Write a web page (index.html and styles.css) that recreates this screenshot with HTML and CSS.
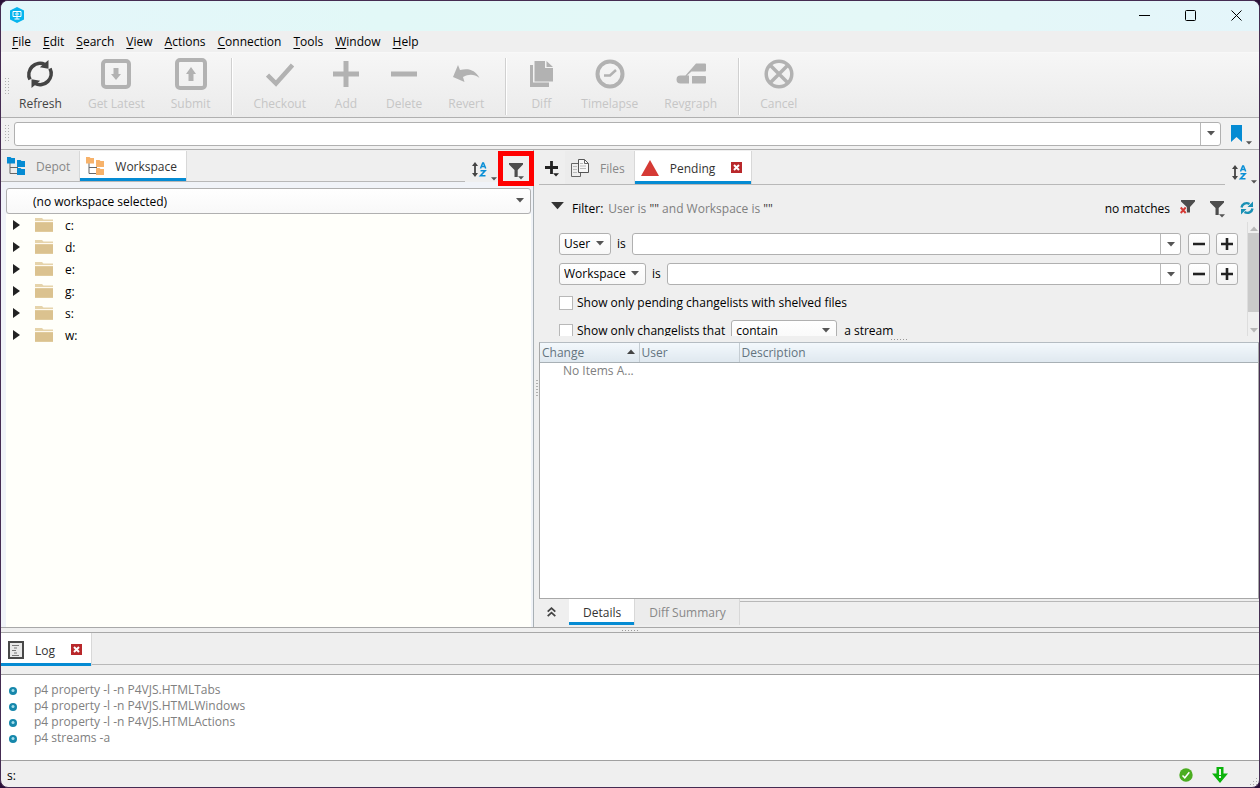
FILE: index.html
```html
<!DOCTYPE html>
<html lang="en">
<head>
<meta charset="utf-8">
<title>P4V</title>
<link rel="stylesheet" href="styles.css">
</head>
<body>
<svg class="defs" aria-hidden="true">
  <symbol id="i-tree" viewBox="0 0 18 18"><path d="M3 5v11.500h8M3 10.500h8" fill="none" stroke="#666" stroke-width="1"/><path d="M0 0h3.500l1 1H8v5.500H0zM10 3h3.500l1 1H18v6h-8zM10 11h3.500l1 1H18v6h-8z" fill="currentColor"/></symbol>
  <symbol id="i-folder" viewBox="0 0 18 14"><path d="M0 0h7l1.500 1.500H18V14H0z" fill="#e6d4ab"/><path d="M0 4.500h18V13.500H0z" fill="#dbc28f"/><path d="M0 3.500h18" stroke="#fffaf0" stroke-width="1"/></symbol>
  <symbol id="i-down" viewBox="0 0 8 5"><path d="M0 0h8L4 4.500z" fill="currentColor"/></symbol>
  <symbol id="i-funnel" viewBox="0 0 14 14"><path d="M0 0h14v1.500L8.700 7v7H5.500V7L0 1.500z" fill="#4d4d4d"/></symbol>
  <symbol id="i-sort" viewBox="0 0 15 16"><path d="M3 2v11" stroke="#444" stroke-width="1.800"/><path d="M3 0L6 4H0zM3 15L0 11h6z" fill="#444"/><path d="M8.500 6.500L10.700 1h.8L13.700 6.500M9.300 4.500h3.600" fill="none" stroke="#0a8fd6" stroke-width="1.500"/><path d="M8.500 8.700h4.600l-4.600 5h5" fill="none" stroke="#0a8fd6" stroke-width="1.600"/></symbol>
  <symbol id="i-close" viewBox="0 0 11 11"><path d="M0 0h11v11H0z" fill="#b9282b"/><path d="M3 3l5 5M8 3L3 8" stroke="#fff" stroke-width="2"/></symbol>
  <symbol id="i-cycle" viewBox="0 0 28 28"><path d="M4 19.500A11.200 11.200 0 0 1 19 4.500M24 8.500A11.200 11.200 0 0 1 9 23.500" fill="none" stroke="currentColor" stroke-width="3.600"/><path d="M22.500 0v8.800L13.800 7.300zM5.500 28v-8.800l8.700 1.500z" fill="currentColor"/></symbol>
  <symbol id="i-minus" viewBox="0 0 12 12"><path d="M0 4.700h12v2.600H0z" fill="currentColor"/></symbol>
  <symbol id="i-plus" viewBox="0 0 12 12"><path d="M0 4.700h4.700V0h2.600v4.700H12v2.600H7.300V12H4.700V7.300H0z" fill="currentColor"/></symbol>
  <symbol id="i-bullet" viewBox="0 0 8 8"><circle cx="4" cy="4" r="4" fill="#1687ab"/><circle cx="4" cy="3.500" r="1.500" fill="#a5deec"/></symbol>
</svg>

<div class="window">
  <header class="titlebar">
    <svg class="app-icon" width="14" height="16" viewBox="0 0 14 16"><path d="M7 0l7 3.500v9L7 16l-7-3.500v-9z" fill="#06b5ee"/><path d="M3 4.500h8v5H3zM7 9.500v2.300M4.500 12h5" fill="none" stroke="#fff" stroke-width="1"/><circle cx="7" cy="7" r="1.200" fill="none" stroke="#fff"/></svg>
    <div class="window-buttons">
      <button aria-label="Minimize"><svg width="11" height="11" viewBox="0 0 11 11"><path d="M0 5.500h11" stroke="#000"/></svg></button>
      <button aria-label="Maximize"><svg width="11" height="11" viewBox="0 0 11 11"><rect x=".5" y=".5" width="10" height="10" rx="1" fill="none" stroke="#000"/></svg></button>
      <button aria-label="Close"><svg width="11" height="11" viewBox="0 0 11 11"><path d="M.5.5l10 10M10.500.5l-10 10" stroke="#000"/></svg></button>
    </div>
  </header>

  <nav class="menubar">
    <button><u>F</u>ile</button><button><u>E</u>dit</button><button><u>S</u>earch</button><button><u>V</u>iew</button><button><u>A</u>ctions</button><button><u>C</u>onnection</button><button><u>T</u>ools</button><button><u>W</u>indow</button><button><u>H</u>elp</button>
  </nav>

  <div class="toolbar">
    <span class="grip"></span>
    <div class="tool-group first">
      <button class="tool"><svg width="28" height="28"><use href="#i-cycle"/></svg>Refresh</button>
      <button class="tool" disabled><svg width="30" height="30" viewBox="0 0 30 30"><rect x="2" y="2" width="26" height="26" rx="3" fill="none" stroke="currentColor" stroke-width="4"/><path d="M12.500 9h5v6H20l-5 6-5-6h2.500z" fill="currentColor"/></svg>Get Latest</button>
      <button class="tool" disabled><svg width="32" height="32" viewBox="0 0 32 32"><rect x="2" y="2" width="28" height="28" rx="3" fill="none" stroke="currentColor" stroke-width="4"/><path d="M13.500 23h5v-7H21l-5-7-5 7h2.500z" fill="currentColor"/></svg>Submit</button>
    </div>
    <div class="tool-group">
      <button class="tool" disabled><svg width="28" height="28" viewBox="0 0 28 28"><path d="M1.500 15l8.500 8.500L26.500 5" fill="none" stroke="currentColor" stroke-width="4.500"/></svg>Checkout</button>
      <button class="tool" disabled><svg width="28" height="28" viewBox="0 0 28 28"><path d="M1 14h26M14 1v26" stroke="currentColor" stroke-width="5"/></svg>Add</button>
      <button class="tool" disabled><svg width="28" height="28" viewBox="0 0 28 28"><path d="M1 14h26" stroke="currentColor" stroke-width="5"/></svg>Delete</button>
      <button class="tool" disabled><svg width="28" height="28" viewBox="0 0 28 28"><path d="M1 17L6 5l2 5c9-2 15 0 19.500 8C22 14 17 14 11 17l1.500 5z" fill="currentColor"/></svg>Revert</button>
    </div>
    <div class="tool-group">
      <button class="tool" disabled><svg width="28" height="28" viewBox="0 0 28 28"><path d="M3 5h3v17.500h16V27H3z" fill="currentColor"/><path d="M7.500 1H18v7h8v13.500H7.500zM19.500 1L26 7h-6.500z" fill="currentColor"/></svg>Diff</button>
      <button class="tool" disabled><svg width="30" height="30" viewBox="0 0 30 30"><circle cx="15" cy="15" r="12.500" fill="none" stroke="currentColor" stroke-width="4"/><path d="M9 16.500h6l6-5.500" fill="none" stroke="currentColor" stroke-width="2.500"/></svg>Timelapse</button>
      <button class="tool" disabled><svg width="30" height="28" viewBox="0 0 30 28"><path d="M9 16L20 3.500h9a1 1 0 0 1 1 1v6a1 1 0 0 1-1 1H15.500L10.500 16zM4.500 15.500H13v8H4.500a4 4 0 0 1 0-8zM16 16h13a1 1 0 0 1 1 1v5.500a1 1 0 0 1-1 1H16z" fill="currentColor"/></svg>Revgraph</button>
    </div>
    <div class="tool-group">
      <button class="tool" disabled><svg width="30" height="30" viewBox="0 0 30 30"><circle cx="15" cy="15" r="12.800" fill="none" stroke="currentColor" stroke-width="3.500"/><path d="M6.500 6.500l17 17M23.500 6.500l-17 17" stroke="currentColor" stroke-width="3.500"/></svg>Cancel</button>
    </div>
  </div>

  <div class="addressbar">
    <span class="grip"></span>
    <div class="combo"><input type="text" aria-label="Address"><button aria-label="Recent locations"><svg width="8" height="5"><use href="#i-down"/></svg></button></div>
    <button class="icon-button" aria-label="Bookmarks"><svg width="11" height="17" viewBox="0 0 11 17"><path d="M0 0h11v17l-5.500-5L0 17z" fill="#058bd3"/></svg><svg class="mini" width="6" height="4"><use href="#i-down"/></svg></button>
  </div>

  <main class="panes">
    <section class="left-pane">
      <div class="tabstrip">
        <div class="tabs">
          <button class="tab blue"><svg width="18" height="18"><use href="#i-tree"/></svg><span>Depot</span></button>
          <button class="tab orange active"><svg width="18" height="18"><use href="#i-tree"/></svg><span>Workspace</span></button>
        </div>
        <div class="tab-tools">
          <button class="icon-button" aria-label="Sort"><svg width="15" height="16"><use href="#i-sort"/></svg><svg class="mini" width="6" height="4"><use href="#i-down"/></svg></button>
          <button class="icon-button highlighted" aria-label="Filter tree"><svg width="14" height="14"><use href="#i-funnel"/></svg><svg class="mini over" width="6" height="4"><use href="#i-down"/></svg></button>
        </div>
      </div>
      <div class="tree-area">
        <div class="select wide"><select aria-label="Workspace"><option>(no workspace selected)</option></select><svg width="8" height="5"><use href="#i-down"/></svg></div>
        <ul class="tree">
          <li><i class="expander"></i><svg width="18" height="14"><use href="#i-folder"/></svg>c:</li>
          <li><i class="expander"></i><svg width="18" height="14"><use href="#i-folder"/></svg>d:</li>
          <li><i class="expander"></i><svg width="18" height="14"><use href="#i-folder"/></svg>e:</li>
          <li><i class="expander"></i><svg width="18" height="14"><use href="#i-folder"/></svg>g:</li>
          <li><i class="expander"></i><svg width="18" height="14"><use href="#i-folder"/></svg>s:</li>
          <li><i class="expander"></i><svg width="18" height="14"><use href="#i-folder"/></svg>w:</li>
        </ul>
      </div>
    </section>

    <div class="splitter vertical"><span></span></div>

    <section class="right-pane">
      <div class="tabstrip">
        <div class="tabs">
          <button class="icon-button add" aria-label="Add tab"><svg width="13" height="13"><use href="#i-plus"/></svg><svg class="mini over" width="6" height="4"><use href="#i-down"/></svg></button>
          <button class="tab files"><svg width="18" height="18" viewBox="0 0 18 18"><path d="M.5 4.500h9v13h-9z" fill="#eee" stroke="#666"/><path d="M7.500.5h6l4 4v9h-10z" fill="#f8f8f8" stroke="#555"/><path d="M13.500.5v4h4" fill="none" stroke="#666"/><path d="M9 4.500h3M9 7h6M9 9.500h6M2 7.500h4M2 10.500h4M2 13.500h4" fill="none" stroke="#bbb"/></svg><span>Files</span></button>
          <button class="tab pending active"><svg width="18" height="16" viewBox="0 0 18 16"><path d="M9 0l9 16H0z" fill="#d53a35"/></svg><span>Pending</span><svg class="close" width="11" height="11"><use href="#i-close"/></svg></button>
        </div>
        <div class="tab-tools">
          <button class="icon-button" aria-label="Sort"><svg width="15" height="16"><use href="#i-sort"/></svg><svg class="mini" width="6" height="4"><use href="#i-down"/></svg></button>
        </div>
      </div>

      <div class="filter">
        <div class="filter-head">
          <svg class="toggle" width="13" height="8"><use href="#i-down"/></svg>
          <span>Filter:</span>
          <span class="query">User is <b>""</b> and Workspace is <b>""</b></span>
          <span class="matches">no matches</span>
          <button class="icon-button" aria-label="Clear filter"><svg width="15" height="15" viewBox="0 0 15 15"><path d="M1 0h14v1.500L10 7v5.500H6.800V7L1 1.500z" fill="#4d4d4d"/><path d="M.7 7.500l5 5.500M5.700 7.500l-5 5.500" stroke="#efefef" stroke-width="3.500"/><path d="M.7 7.500l5 5.500M5.700 7.500l-5 5.500" stroke="#d53a35" stroke-width="1.900"/></svg></button>
          <button class="icon-button funnel" aria-label="Filter menu"><svg width="14" height="14"><use href="#i-funnel"/></svg><svg class="mini over" width="6" height="4"><use href="#i-down"/></svg></button>
          <button class="icon-button teal" aria-label="Refresh list"><svg width="14" height="14" viewBox="0 0 14 14"><path d="M1.500 6.500C2 3 6 .8 9.500 3M12.500 7.500C12 11 8 13.200 4.500 11" fill="none" stroke="currentColor" stroke-width="2.400"/><path d="M13 .5v5.500H7.500zM1 13.500V8h5.500z" fill="currentColor"/></svg></button>
        </div>
        <div class="filter-body">
          <div class="conditions">
            <div class="condition">
              <div class="select user"><select aria-label="Field"><option>User</option></select><svg width="8" height="5"><use href="#i-down"/></svg></div>
              <span>is</span>
              <div class="combo"><input type="text" aria-label="User value"><button aria-label="User choices"><svg width="8" height="5"><use href="#i-down"/></svg></button></div>
              <button class="square" aria-label="Remove"><svg width="12" height="12"><use href="#i-minus"/></svg></button>
              <button class="square" aria-label="Add"><svg width="12" height="12"><use href="#i-plus"/></svg></button>
            </div>
            <div class="condition">
              <div class="select workspace"><select aria-label="Field"><option>Workspace</option></select><svg width="8" height="5"><use href="#i-down"/></svg></div>
              <span>is</span>
              <div class="combo"><input type="text" aria-label="Workspace value"><button aria-label="Workspace choices"><svg width="8" height="5"><use href="#i-down"/></svg></button></div>
              <button class="square" aria-label="Remove"><svg width="12" height="12"><use href="#i-minus"/></svg></button>
              <button class="square" aria-label="Add"><svg width="12" height="12"><use href="#i-plus"/></svg></button>
            </div>
            <div class="check"><input type="checkbox" id="shelved"><label for="shelved">Show only pending changelists with shelved files</label></div>
            <div class="check"><input type="checkbox" id="stream"><label for="stream">Show only changelists that</label><div class="select contain"><select aria-label="Stream match"><option>contain</option></select><svg width="8" height="5"><use href="#i-down"/></svg></div><span>a stream</span></div>
          </div>
          <div class="scrollbar"><svg class="up" width="8" height="5"><use href="#i-down"/></svg><span class="thumb"></span><svg width="8" height="5"><use href="#i-down"/></svg></div>
        </div>
      </div>

      <div class="splitter"><span></span></div>

      <div class="results">
        <table>
          <colgroup><col class="c-change"><col class="c-user"><col></colgroup>
          <thead><tr><th>Change<svg class="up" width="8" height="5"><use href="#i-down"/></svg></th><th>User</th><th>Description</th></tr></thead>
          <tbody><tr><td>No Items A...</td><td></td><td></td></tr></tbody>
        </table>
      </div>

      <div class="detail-tabs">
        <button class="collapse" aria-label="Expand details"><svg width="9" height="10" viewBox="0 0 9 10"><path d="M.7 4.700l3.800-3.500 3.800 3.500M.7 9.200l3.800-3.500 3.800 3.500" fill="none" stroke="#444" stroke-width="1.800"/></svg></button>
        <button class="tab active">Details</button>
        <button class="tab">Diff Summary</button>
        <span class="rule"></span>
      </div>
    </section>
  </main>

  <div class="splitter"><span></span></div>

  <section class="log">
    <div class="log-tabs">
      <button class="tab active"><svg width="16" height="18" viewBox="0 0 16 18"><path d="M1 1h14v16H1z" fill="#e8e8e8" stroke="#484848" stroke-width="2"/><path d="M4 4.500h7M6 7h3M4 9.500h4M6 12h3M4 14.500h7" stroke="#777" stroke-width="1"/></svg><span>Log</span><svg class="close" width="11" height="11"><use href="#i-close"/></svg></button>
    </div>
    <ul class="log-list">
      <li><svg width="8" height="8"><use href="#i-bullet"/></svg>p4 property -l -n P4VJS.HTMLTabs</li>
      <li><svg width="8" height="8"><use href="#i-bullet"/></svg>p4 property -l -n P4VJS.HTMLWindows</li>
      <li><svg width="8" height="8"><use href="#i-bullet"/></svg>p4 property -l -n P4VJS.HTMLActions</li>
      <li><svg width="8" height="8"><use href="#i-bullet"/></svg>p4 streams -a</li>
    </ul>
  </section>

  <footer class="statusbar">
    <span>s:</span>
    <svg width="14" height="14" viewBox="0 0 14 14"><circle cx="7" cy="7" r="6.700" fill="#4bad20"/><path d="M3.500 7.500l2.300 2.300 4.500-5.500" fill="none" stroke="#fff" stroke-width="1.500"/></svg>
    <svg width="16" height="16" viewBox="0 0 16 16"><path d="M4.500 0h7v6.500H16L8 16 0 6.500h4.500z" fill="#0bb30b"/><path d="M7 2h2v6H7zM7 9h2v2H7z" fill="#e6f8e6"/></svg>
    <span class="size-grip"></span>
  </footer>
</div>
</body>
</html>
```
FILE: styles.css
```css
* { box-sizing: border-box; }
html, body { height: 100%; }
body {
  margin: 0;
  background: #2a1038;
  color: #000;
  font: 12px/16px "Open Sans", "Noto Sans", sans-serif;
}
button, input, select { font: inherit; color: inherit; margin: 0; }
button { border: 0; padding: 0; background: none; }
svg { display: block; flex: none; }
ul { list-style: none; margin: 0; padding: 0; }
.defs { position: absolute; width: 0; height: 0; }

.window {
  display: flex;
  flex-direction: column;
  height: 100vh;
  border: 1px solid #452c52;
  border-radius: 8px;
  overflow: hidden;
  background: #efefef;
}

/* Title and menu */
.titlebar {
  display: flex;
  flex: none;
  align-items: center;
  justify-content: space-between;
  height: 30px;
  padding: 0 0 2px 9px;
  background: linear-gradient(90deg, #e4f6fa, #e2f8f7 30%, #e4f8f7 70%, #e4f5fa);
}
.window-buttons { display: flex; }
.window-buttons button {
  display: grid;
  place-items: center;
  width: 46px;
  height: 28px;
}
.menubar {
  display: flex;
  flex: none;
  gap: 12px;
  height: 21px;
  padding: 2px 11px;
}
.menubar u { text-underline-offset: 2px; }

/* Toolbar */
.toolbar {
  display: flex;
  flex: none;
  height: 66px;
  padding: 5px 0 2px 4px;
  border-top: 1px solid #f8f8f8;
  border-bottom: 1px solid #b0b0b0;
  background: linear-gradient(#f6f6f6, #ebebeb);
}
.grip {
  align-self: center;
  flex: none;
  width: 6px;
  height: 18px;
  background: conic-gradient(from 270deg at 1px 1px, #b0b0b0 90deg, transparent 0) 0 0 / 3px 3px;
}
.tool-group { display: flex; padding: 0 8px; }
.tool-group + .tool-group { border-left: 1px solid #d0d0d0; box-shadow: inset 1px 0 #fff; }
.tool-group.first { padding-left: 0; }
.tool-group.first .tool:first-child { padding-left: 8px; }
.tool {
  display: flex;
  flex-direction: column;
  align-items: center;
  justify-content: space-between;
  padding: 0 13px 3px;
  color: #444;
}
.tool svg { height: 32px; }
.tool:disabled { color: #c6c6c6; }
.tool:disabled svg { color: #b2b2b2; }

/* Address row */
.addressbar {
  display: flex;
  flex: none;
  align-items: center;
  height: 32px;
  padding: 0 7px 0 4px;
  border-bottom: 1px solid #b0b0b0;
  background: #f1f1f1;
}
.addressbar .grip { margin-right: 3px; }
.addressbar .combo { height: 24px; margin-right: 10px; }
.combo {
  display: flex;
  flex: 1;
  min-width: 0;
  height: 22px;
  border: 1px solid #b0b0b0;
  border-radius: 3px;
  background: #fff;
  color: #555;
  overflow: hidden;
}
.combo input { flex: 1; min-width: 0; border: 0; padding: 0 4px; background: none; outline: 0; }
.combo button { display: grid; place-items: center; width: 20px; border-left: 1px solid #b8b8b8; }
.icon-button { display: flex; align-items: flex-end; gap: 4px; color: #555; }
.mini.over { margin-left: -9px; }
.icon-button .mini { margin-bottom: -3px; }

.select { position: relative; flex: none; height: 22px; }
.select select {
  appearance: none;
  width: 100%;
  height: 100%;
  padding: 0 4px;
  border: 1px solid #b0b0b0;
  border-radius: 3px;
  background: linear-gradient(#fff, #f8f8f8);
}
.select svg {
  position: absolute;
  top: 8px;
  right: 7px;
  color: #555;
  pointer-events: none;
}

/* Panes */
.panes {
  display: grid;
  flex: 1;
  grid-template-columns: minmax(0, 533fr) 5px minmax(0, 720fr);
  min-height: 0;
}
.left-pane, .right-pane { display: flex; flex-direction: column; min-height: 0; }
.left-pane { border-right: 1px solid #a8b0b5; background: #f0f3f8; }
.tabstrip { display: flex; flex: none; height: 32px; background: #efefef; }
.tabs { display: flex; flex: 1; padding-top: 1px; border-bottom: 1px solid #b8b8b8; }
.tab {
  display: flex;
  align-items: center;
  gap: 11px;
  padding: 0 9px 0 6px;
  border-right: 1px solid #d8d8d8;
  background: #ececec;
  color: #888;
}
.tab span { padding-top: 2px; }
.tab.active { background: #fff; color: #333; box-shadow: inset 0 -3px #058bd3; }
.tab.blue svg { color: #058bd3; }
.tab.orange svg { color: #f7b26a; }
.tab .close { margin-left: 5px; }
.tab-tools { display: flex; align-items: center; gap: 12px; padding: 7px 9px 0 7px; }
.highlighted { position: relative; }
.highlighted::after {
  content: "";
  position: absolute;
  inset: -12px -10px -9px -11px;
  border: 5px solid #f00;
}
.tree-area {
  display: flex;
  flex: 1;
  flex-direction: column;
  padding: 6px 2px 0 5px;
}
.select.wide { height: 26px; }
.wide select { padding: 1px 26px 0; }
.wide svg { top: 10px; }
.tree { flex: 1; padding-top: 1px; background: #fffffa; }
.tree li { display: flex; align-items: center; height: 22px; padding-left: 7px; }
.tree li svg { margin: 0 12px 2px 15px; }
.expander {
  margin-bottom: 2px;
  border: 5px solid transparent;
  border-left: 7px solid #222;
  border-right: 0;
}

.splitter { display: flex; flex: none; align-items: center; justify-content: center; height: 6px; }
.splitter span {
  width: 17px;
  height: 1px;
  background: repeating-linear-gradient(90deg, #999 0 1px, transparent 1px 3px);
}
.splitter.vertical { height: auto; }
.splitter.vertical span {
  width: 2px;
  height: 17px;
  background: repeating-linear-gradient(#b0b0b0 0 1px, transparent 1px 3px);
}

/* Right pane */
.right-pane .tabstrip { height: 35px; }
.icon-button.add { align-self: center; padding: 0 6px; color: #222; }
.right-pane .tab-tools { padding: 10px 2px 0 7px; }
.filter { display: flex; flex: none; flex-direction: column; height: 151px; }
.filter-head { display: flex; flex: none; align-items: center; height: 37px; padding: 8px 5px 0 12px; }
.filter-head > span { padding-top: 2px; }
.toggle { margin: 0 8px 4px 0; color: #333; }
.query { margin-left: 5px; color: #808080; }
.query b { font-weight: 400; color: #333; }
.matches { margin: 0 10px 0 auto; }
.funnel { margin: 0 15px; }
.teal { color: #1a91b5; }
.filter-body { display: flex; flex: 1; min-height: 0; overflow: hidden; }
.conditions { display: flex; flex: 1; flex-direction: column; gap: 8px; padding: 11px 9px 0 20px; }
.condition { display: flex; flex: none; align-items: center; gap: 6px; height: 22px; }
.condition .combo + .square { margin-left: 1px; }
.select.user { width: 52px; }
.select.workspace { width: 87px; }
.select.contain { width: 106px; }
.square {
  display: grid;
  place-items: center;
  width: 22px;
  height: 22px;
  border: 1px solid #b0b0b0;
  border-radius: 3px;
  background: linear-gradient(#fff, #f3f3f3);
  color: #222;
}
.check { display: flex; flex: none; align-items: center; height: 20px; }
.check input {
  appearance: none;
  width: 14px;
  height: 14px;
  margin: 0 4px 0 0;
  border: 1px solid #b8b8b8;
  background: #fff;
}
.check .select { margin: 0 7px 0 6px; }
.scrollbar {
  display: flex;
  flex-direction: column;
  align-items: center;
  width: 12px;
  padding: 4px 0 3px;
  border-left: 1px solid #ddd;
  color: #b8b8b8;
}
.scrollbar .thumb { align-self: stretch; height: 79px; margin: 2px 0 auto; background: #cacaca; }
.up { transform: rotate(180deg); }

.results { flex: 1; border: 1px solid #a8a8a8; border-top-color: #b5bcc2; background: #fff; color: #808080; }
.results table { width: 100%; border-collapse: collapse; table-layout: fixed; }
.c-change { width: 99px; }
.c-user { width: 100px; }
.results th {
  height: 19px;
  padding: 1px 2px 0;
  border-right: 1px solid #c5cdd3;
  border-bottom: 1px solid #a8b0b5;
  background: linear-gradient(#f3f8fc, #dfe8ef);
  color: #64747e;
  font-weight: 400;
  text-align: left;
}
.results th:last-child { border-right: 0; }
.results th svg { float: right; margin: 4px 2px 0 0; color: #444; }
.results td { height: 18px; padding: 0; }
.results td:first-child { padding-left: 23px; white-space: nowrap; }

.detail-tabs { display: flex; flex: none; height: 28px; padding-bottom: 2px; }
.collapse { display: grid; place-items: center; width: 30px; padding-right: 6px; }
.detail-tabs .tab { padding: 1px 13px 0 14px; }
.rule { flex: 1; height: 3px; border-bottom: 1px solid #b8b8b8; }

/* Log */
.window > .splitter { border: solid #a8a8a8; border-width: 1px 0; }
.log { flex: none; }
.log-tabs { display: flex; height: 32px; border-bottom: 1px solid #b8b8b8; }
.log-tabs .tab { height: 33px; padding-left: 7px; }
.log-list {
  margin-top: 9px;
  padding: 7px 8px 14px;
  border: solid #a0a0a0;
  border-width: 1px 0;
  background: #fff;
  color: #808080;
}
.log-list li { display: flex; align-items: center; gap: 17px; }
.log-list svg { margin-top: 2px; }
.statusbar { display: flex; flex: none; align-items: center; height: 26px; gap: 19px; padding: 2px 0 0 6px; }
.statusbar > :first-child { margin-right: auto; padding-top: 2px; }
.size-grip {
  align-self: flex-end;
  width: 12px;
  height: 12px;
  background: conic-gradient(from 270deg at 1px 1px, #aaa 90deg, transparent 0) 0 0 / 3px 3px;
  clip-path: polygon(100% 0, 100% 100%, 0 100%);
}
```
